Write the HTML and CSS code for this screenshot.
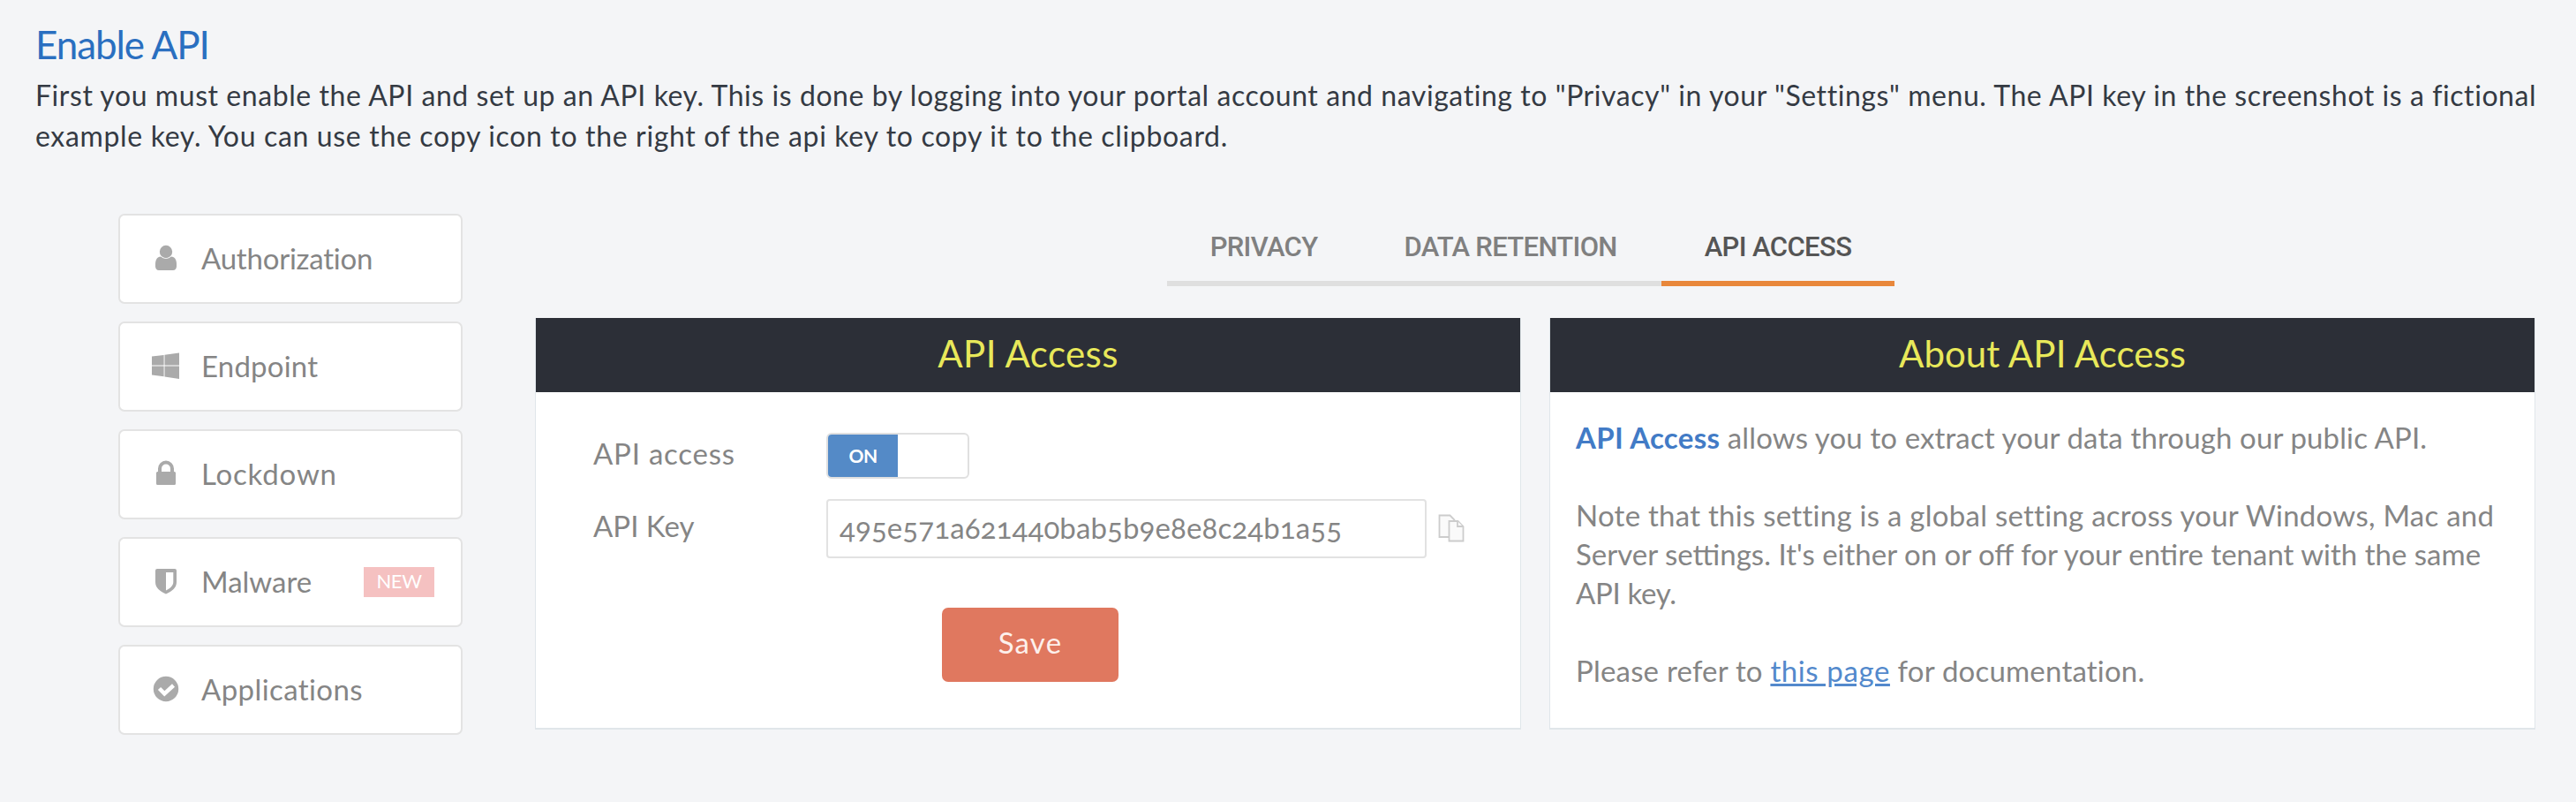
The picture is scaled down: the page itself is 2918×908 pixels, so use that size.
FILE: index.html
```
<!DOCTYPE html>
<html lang="en">
<head>
<meta charset="utf-8">
<title>Enable API</title>
<link rel="stylesheet" href="styles.css">
</head>
<body>
<h1 class="title">Enable API</h1>
<p class="intro">First you must enable the API and set up an API key. This is done by logging into your portal account and navigating to "Privacy" in your "Settings" menu. The API key in the screenshot is a fictional<br><span class="intro-end">example key. You can use the copy icon to the right of the api key to copy it to the clipboard.</span></p>
<div class="content">
  <nav class="side">
    <a class="item authorization"><svg class="icon" viewBox="0 0 32 32"><circle cx="16" cy="9" r="7.2"/><path d="M10 14.5C6 15 4 18 4 23v2.500c0 2.500 1.500 4.500 4 4.500h16c2.500 0 4-2 4-4.500V23c0-5-2-8-6-8.500a8.500 8.500 0 0 1-12 0z"/></svg>Authorization</a>
    <a class="item endpoint"><svg class="icon" viewBox="0 0 32 32"><path d="M0 5.500 13.600 4v11.600H0zM14.500 3.800 31 1.500v14.100H14.500zM0 16.500h13.600V28.200L0 26.500zM14.500 16.500H31v14.500l-16.500-2.500z"/></svg>Endpoint</a>
    <a class="item lockdown"><svg class="icon" viewBox="0 0 32 32"><path fill-rule="evenodd" d="M7 14v-3.500a9 9 0 0 1 18 0V14h.500a1.500 1.500 0 0 1 1.500 1.500v12a1.500 1.500 0 0 1-1.500 1.500h-19A1.500 1.500 0 0 1 5 27.500v-12A1.500 1.500 0 0 1 6.500 14zm4 0h10v-3.500a5 5 0 0 0-10 0z"/></svg>Lockdown</a>
    <a class="item"><svg class="icon" viewBox="0 0 32 32"><path fill-rule="evenodd" d="M6 2h20a2 2 0 0 1 2 2v13c0 6.500-5 10.500-12 13.500C9 27.500 4 23.500 4 17V4a2 2 0 0 1 2-2zm10 4v20.500c5-2.500 8.300-5.500 8.300-9.500V6z"/></svg>Malware<b class="badge">NEW</b></a>
    <a class="item applications"><svg class="icon" viewBox="0 0 32 32"><circle cx="16" cy="16" r="14.200"/><path class="tick" d="m8.500 15.500 5.800 5.800L24.500 12"/></svg>Applications</a>
  </nav>
  <main class="main">
    <div class="tabs">
      <a class="tab privacy">PRIVACY</a><a class="tab retention">DATA RETENTION</a><a class="tab active">API ACCESS</a>
    </div>
    <div class="panels">
      <section class="panel">
        <h2 class="head head-access">API Access</h2>
        <form class="form">
          <label class="label">API access</label>
          <div class="toggle"><span class="on">ON</span></div>
          <label class="label key">API Key</label>
          <div class="keyrow">
            <div class="input">495e571a621440bab5b9e8e8c24b1a55</div>
            <svg class="copy" viewBox="0 0 30 32"><path d="M1.500 1.500h12l5 5V26h-17z"/><path d="M12.500 8h10l6 6v16.500h-16z"/><path d="M22 8v6h6"/></svg>
          </div>
          <div class="save">Save</div>
        </form>
      </section>
      <section class="panel">
        <h2 class="head">About API Access</h2>
        <div class="about">
          <p class="lead"><strong>API Access</strong> allows you to extract your data through our public API.</p>
          <p><span class="note">Note that this setting is a global setting across your Windows, Mac and</span><br>Server settings. It's either on or off for your entire tenant with the same<br><span class="note-end">API key.</span></p>
          <p class="docs">Please refer to <a class="link">this page</a> for documentation.</p>
        </div>
      </section>
    </div>
  </main>
</div>
</body>
</html>
```
FILE: styles.css
```
* { box-sizing: border-box; }
body { margin: 0; padding: 24px 48px 0 40px; height: 908px; overflow: hidden; background: #f4f5f7; font-family: Lato, "Open Sans", sans-serif; font-size: 33px; color: #858585; white-space: nowrap; }
h1, h2, p { margin: 0; font-weight: 400; }
.title { font-size: 44px; line-height: 52px; margin-bottom: 9px; color: #2a6fc0; letter-spacing: -1.1px; }
.intro { font-size: 32px; line-height: 46px; color: #343a43; letter-spacing: .565px; }
.intro-end { letter-spacing: .66px; }
.content { display: flex; padding: 65px 0 0 94px; gap: 82px; }
.side { display: flex; flex-direction: column; gap: 20px; width: 390px; flex: none; }
.item { display: flex; align-items: center; height: 102px; background: #fff; border: 2px solid #e3e3e3; border-radius: 7px; padding: 0 30px 3px 36px; }
.authorization { letter-spacing: -.23px; }
.endpoint { letter-spacing: .19px; }
.lockdown { letter-spacing: .8px; }
.applications { letter-spacing: .4px; }
.icon { width: 32px; height: 32px; margin-right: 24px; fill: #aaa; }
.tick { fill: none; stroke: #fff; stroke-width: 4.500; }
.badge { margin-left: auto; width: 80px; height: 34px; background: #f5c1c1; color: #fff; font-size: 22px; line-height: 32px; text-align: center; font-weight: 400; letter-spacing: -.4px; margin-bottom: -3px; }
.main { flex: none; width: 2266px; display: flex; flex-direction: column; }
.tabs { display: flex; align-self: center; margin-right: 10px; font-family: Roboto, sans-serif; font-weight: 500; font-size: 31px; line-height: 75px; color: #808080; }
.tab { padding: 0 49px 1px; border-bottom: 6px solid #dfdfdf; }
.privacy { letter-spacing: -.67px; }
.retention { letter-spacing: -.67px; padding-right: 50px; }
.active { letter-spacing: -.6px; color: #555; border-color: #e8873b; }
.panels { display: flex; gap: 32px; margin-top: 36px; }
.panel { width: 1117px; height: 466px; background: #fff; border: 1px solid #e0e6ea; border-top: 0; border-bottom-width: 2px; }
.head { height: 84px; line-height: 80px; background: #2c2f37; color: #e8e85a; text-align: center; font-size: 42px; letter-spacing: .06px; }
.head-access { letter-spacing: .39px; }
.form { display: grid; grid-template-columns: 264px 760px; grid-template-rows: 52px 67px 84px; row-gap: 23px; padding: 46px 0 0 65px; }
.label { line-height: 47px; letter-spacing: .76px; }
.key { line-height: 60px; letter-spacing: 0; }
.toggle { width: 162px; height: 52px; border: 2px solid #e0e0e0; border-radius: 6px; overflow: hidden; }
.on { display: block; width: 79px; height: 48px; background: #548ac7; color: #fff; font-size: 21px; line-height: 47px; font-weight: 700; text-align: center; letter-spacing: -.5px; }
.keyrow { display: flex; align-items: center; gap: 13px; }
.input { width: 680px; height: 67px; border: 2px solid #e2e2e2; border-radius: 4px; padding-left: 13px; line-height: 60px; letter-spacing: .12px; font-variant-numeric: oldstyle-nums; }
.copy { width: 30px; height: 32px; margin-top: -1px; fill: #fafafa; stroke: #ccc; stroke-width: 1.800; }
.save { grid-column: 2; margin: 33px 0 0 131px; width: 200px; height: 84px; background: #e0785f; border-radius: 7px; color: #fdf0ec; text-align: center; line-height: 78px; letter-spacing: 1.2px; }
.about { padding: 29px 0 0 29px; line-height: 44px; }
.about p + p { margin-top: 44px; }
.about strong { color: #427bc6; font-weight: 700; letter-spacing: .29px; }
.lead { letter-spacing: .12px; }
.note { letter-spacing: .26px; }
.note-end { letter-spacing: -.33px; }
.docs { letter-spacing: .2px; }
.link { color: #5389cc; text-decoration: underline; letter-spacing: .6px; }
```
